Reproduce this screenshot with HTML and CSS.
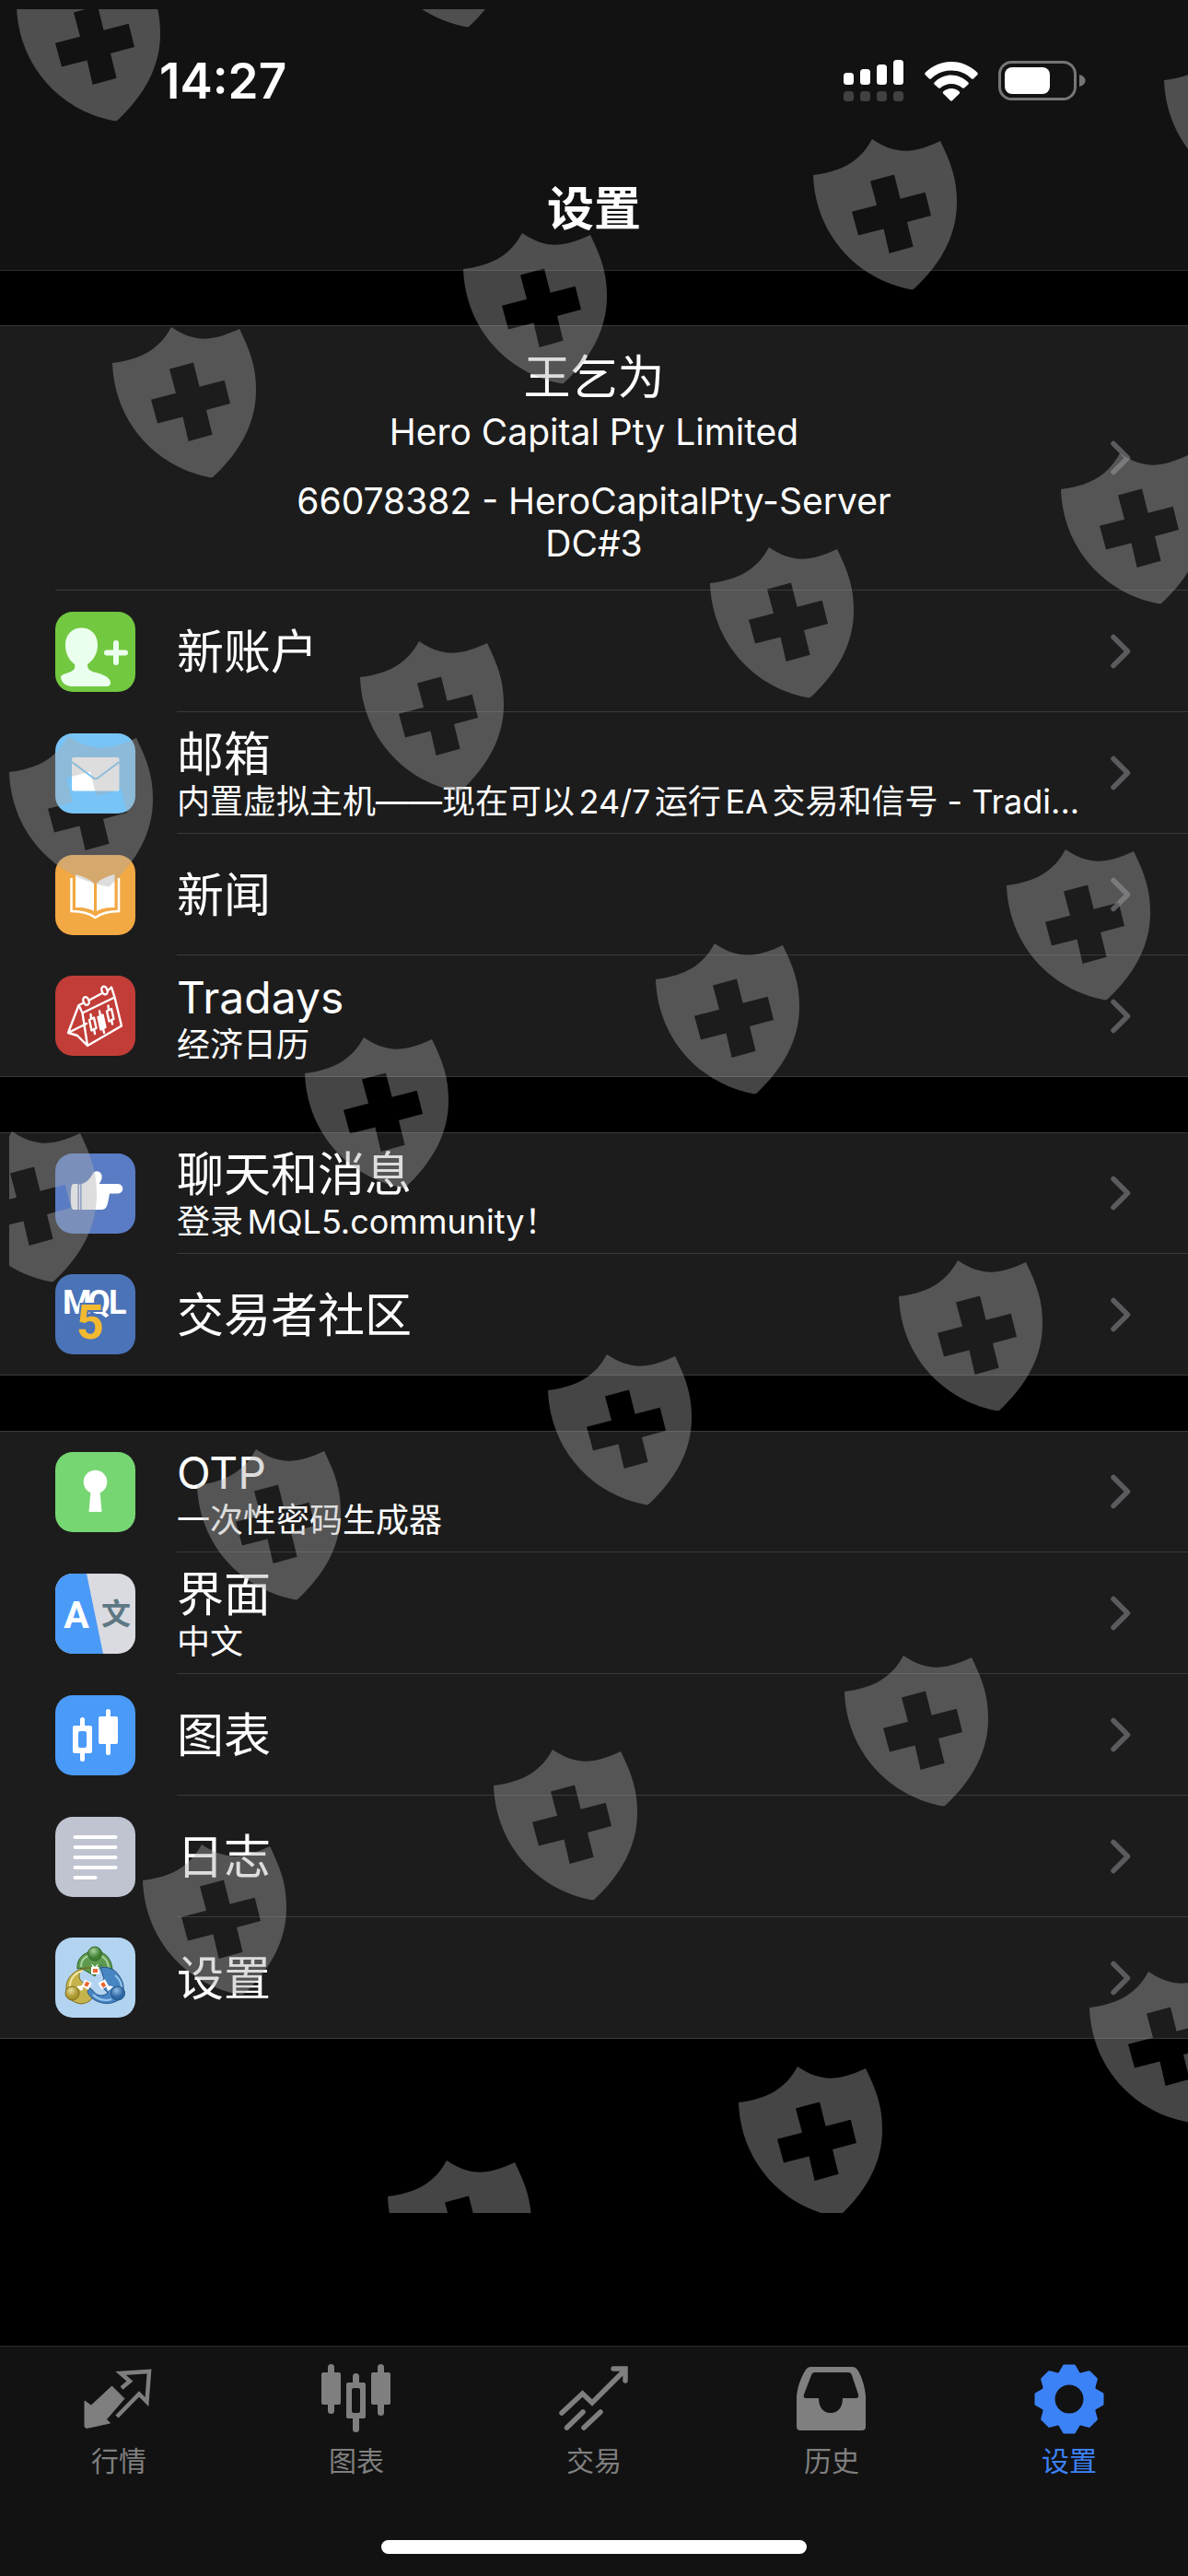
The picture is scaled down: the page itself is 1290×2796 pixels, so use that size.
FILE: index.html
```html
<!DOCTYPE html>
<html lang="zh-CN">
<head>
<meta charset="utf-8">
<meta name="viewport" content="width=device-width, initial-scale=1">
<title>设置</title>
<link rel="stylesheet" href="styles.css">
</head>
<body>
<svg class="defs" aria-hidden="true">
  <symbol id="chevron" viewBox="0 0 22 38">
    <path d="M3 3.500 L18.500 19 L3 34.500" fill="none" stroke="#5a5a5f" stroke-width="5.500" stroke-linecap="round" stroke-linejoin="round"/>
  </symbol>
  <path id="shield" fill-rule="evenodd" d="M0 0C32 -4 51 -15 64 -39C88 -23 106 -22 138 -37C150 -12 156 4 156 30C156 66 138 97 109 124Q107 124.500 105 124C45 112 2 62 0 0ZM62 6.400L69 32.700L42 39.700L49 65.400L76.500 58.400L82.600 85L108.600 77.700L102 51L128 44L121.700 18.700L94.600 25.700L88 -.600Z"/>
  <path id="tooth" d="M-9.500 -29L-5.500 -36H5.500L9.500 -29Z" stroke-width="3" stroke-linejoin="round"/>
</svg>

<header class="header">
  <div class="status">
    <time class="clock">14:27</time>
    <div class="indicators">
      <svg class="signal" viewBox="0 0 66 46" role="img" aria-label="信号">
        <g fill="#fff"><rect x="0" y="14" width="11" height="13" rx="3.500"/><rect x="18" y="10" width="11" height="17" rx="3.500"/><rect x="36" y="5" width="11" height="22" rx="3.500"/><rect x="54" y="0" width="11" height="27" rx="3.500"/></g>
        <g fill="#414141"><rect x="0" y="34" width="11" height="11" rx="3.500"/><rect x="18" y="34" width="11" height="11" rx="3.500"/><rect x="36" y="34" width="11" height="11" rx="3.500"/><rect x="54" y="34" width="11" height="11" rx="3.500"/></g>
      </svg>
      <svg class="wifi" viewBox="0 0 58 43" role="img" aria-label="无线网络">
        <g fill="#fff"><path d="M29 0C40 0 50 4.500 57.500 12Q58 13 57.500 14L53 18.500Q52 19 51 18.500C45 12.500 37.500 9.500 29 9.500S13 12.500 7 18.500Q6 19 5 18.500L.5 14Q0 13 .5 12C8 4.500 18 0 29 0Z"/><path d="M29 14.500C36 14.500 42.500 17.500 47.500 22.500Q48 23.500 47.500 24.500L43 28.500Q42 29 41 28.500C37.500 25.500 33.500 24 29 24S20.500 25.500 17 28.500Q16 29 15 28.500L10.500 24.500Q10 23.500 10.500 22.500C15.500 17.500 22 14.500 29 14.500Z"/><path d="M29 29C32.500 29 35.500 30.500 37.800 32.500Q38.500 33.500 37.800 34.500L30 42.300Q29 43 28 42.300L20.200 34.500Q19.500 33.500 20.200 32.500C22.500 30.500 25.500 29 29 29Z"/></g>
      </svg>
      <svg class="battery" viewBox="0 0 96 44" role="img" aria-label="电池">
        <rect x="1.500" y="1.500" width="82" height="40" rx="13" fill="none" stroke="#767676" stroke-width="3"/>
        <path d="M88 15C92 16 94.500 18.500 94.500 21.500S92 27 88 28Z" fill="#767676"/>
        <rect x="7" y="7" width="49" height="29" rx="8" fill="#fff"/>
      </svg>
    </div>
  </div>
  <h1 class="nav-title">设置</h1>
</header>

<main class="content">
  <section class="group">
    <a class="profile" href="#account">
      <span class="profile-text">
        <span class="title">王乞为</span>
        <span class="detail company">Hero Capital Pty Limited</span>
        <span class="detail server">66078382 - HeroCapitalPty-Server<br>DC#3</span>
      </span>
      <svg class="chevron"><use href="#chevron"/></svg>
    </a>
    <a class="row" href="#new-account">
      <svg class="icon" viewBox="0 0 87 87">
        <rect width="87" height="87" rx="19" fill="#72c840"/>
        <path d="M28.500 17.500C39 17.500 46 25 46 36C46 45 42 52 35 57C34.500 61 37 64 42 65.500C51 67.500 60 71 60 77Q60 81 56 81H18C12 81 6 77 6 70C8 68 13 66.500 17 65C21 63.500 22 60 21 57C14.500 52 11 45 11 36C11 25 18 17.500 28.500 17.500Z" fill="#ebffef"/>
        <path d="M66 34V55M56 44.500H76" stroke="#ebffef" stroke-width="6" stroke-linecap="round"/>
      </svg>
      <span class="body"><span class="text"><span class="title">新账户</span></span><svg class="chevron"><use href="#chevron"/></svg></span>
    </a>
    <a class="row" href="#mail">
      <svg class="icon" viewBox="0 0 87 87">
        <rect width="87" height="87" rx="19" fill="#78c4f6"/>
        <rect x="18" y="26" width="51.500" height="36.500" rx="2" fill="#fff"/>
        <path d="M18 31L41.500 48.500Q43.700 50 46 48.500L69.500 31" fill="none" stroke="#78c4f6" stroke-width="2"/>
      </svg>
      <span class="body"><span class="text"><span class="title">邮箱</span><span class="subtitle">内置虚拟主机——现在可以24/7运行EA交易和信号 - Tradi...</span></span><svg class="chevron"><use href="#chevron"/></svg></span>
    </a>
    <a class="row" href="#news">
      <svg class="icon" viewBox="0 0 87 87">
        <rect width="87" height="87" rx="19" fill="#f2a843"/>
        <path d="M22 21C29 23 38 26 42 31V61C36 57.500 30 57 22 57ZM64.500 21C57 23 49 26 45 31V61C51 57.500 57 57 64.500 57Z" fill="#fff"/>
        <path d="M17.500 25V61C28 61 36 62.500 43.500 68C51 62.500 59 61 69 61V25" fill="none" stroke="#fff" stroke-width="2.500"/>
      </svg>
      <span class="body"><span class="text"><span class="title">新闻</span></span><svg class="chevron"><use href="#chevron"/></svg></span>
    </a>
    <a class="row" href="#tradays">
      <svg class="icon" viewBox="0 0 87 87">
        <rect width="87" height="87" rx="19" fill="#c23d38"/>
        <g fill="none" stroke="#fff" stroke-width="2.400" stroke-linejoin="round" stroke-linecap="round">
          <path d="M29.500 40.500L64.500 23.500L72 54.500L35 76ZM29.500 40.500L25.500 32L14 62L24 65L35 76M14 62L34 52M25.500 32L31 29.500M38 26L50 19.500M58 15.500L61 12.500L64.500 23.500"/>
          <ellipse cx="33.500" cy="27.500" rx="3" ry="4.500" transform="rotate(-20 33.500 27.500)"/>
          <ellipse cx="53.500" cy="16" rx="3" ry="4.500" transform="rotate(-20 53.500 16)"/>
          <path d="M37 48L42 45.500L44.500 57L39.500 59.500ZM39 46.500L38.500 42M42 58L43 63M56 38.500L61 36L63.500 47L58.500 49.500ZM58 37L57.500 32.500M61 48L62 52.500"/>
          <path d="M46.500 45L51.500 42.500L54.500 56L49.500 58.500ZM49 43.500L48 38.500M52 57.500L53 62" fill="#fff"/>
        </g>
      </svg>
      <span class="body"><span class="text"><span class="title latin">Tradays</span><span class="subtitle">经济日历</span></span><svg class="chevron"><use href="#chevron"/></svg></span>
    </a>
  </section>

  <section class="group">
    <a class="row" href="#chat">
      <svg class="icon" viewBox="0 0 87 87">
        <rect width="87" height="87" rx="19" fill="#5a7cc4"/>
        <path d="M24.500 33V61H20.500Q18 61 17.500 58C16.500 51 16.500 43 17.500 36Q18 33 20.500 33ZM28.500 33C34 32 38 27 41 21.500C43 18.500 47 18.500 49.500 21.500C52 25 50 30 47.500 33H68C75 33 75 43.500 68 43.500H59C58 49 57.500 53 56 57Q54.500 61 50 61H28.500Z" fill="#fff"/>
        <path d="M26.500 33.500V61" stroke="#fff" stroke-width="1.500"/>
      </svg>
      <span class="body"><span class="text"><span class="title">聊天和消息</span><span class="subtitle">登录MQL5.community！</span></span><svg class="chevron"><use href="#chevron"/></svg></span>
    </a>
    <a class="row" href="#community">
      <svg class="icon" viewBox="0 0 87 87">
        <rect width="87" height="87" rx="19" fill="#4b73b7"/>
        <text class="logo-mql" x="8 35 58" y="43">MQL</text>
        <text class="logo-five" x="23" y="70">5</text>
      </svg>
      <span class="body"><span class="text"><span class="title">交易者社区</span></span><svg class="chevron"><use href="#chevron"/></svg></span>
    </a>
  </section>

  <section class="group">
    <a class="row" href="#otp">
      <svg class="icon" viewBox="0 0 87 87">
        <rect width="87" height="87" rx="19" fill="#76d672"/>
        <circle cx="43.500" cy="32.500" r="12.800" fill="#fff"/>
        <path d="M38.500 42H48.500L50.500 65H36.500Z" fill="#fff"/>
      </svg>
      <span class="body"><span class="text"><span class="title latin">OTP</span><span class="subtitle">一次性密码生成器</span></span><svg class="chevron"><use href="#chevron"/></svg></span>
    </a>
    <a class="row" href="#interface">
      <svg class="icon" viewBox="0 0 87 87">
        <rect width="87" height="87" rx="19" fill="#dadbe0"/>
        <path d="M19 0H34L52 87H19A19 19 0 0 1 0 68V19A19 19 0 0 1 19 0Z" fill="#4a9af8"/>
        <text class="glyph-a" x="23" y="59" text-anchor="middle">A</text>
        <text class="glyph-wen" x="66" y="55" text-anchor="middle">文</text>
      </svg>
      <span class="body"><span class="text"><span class="title">界面</span><span class="subtitle">中文</span></span><svg class="chevron"><use href="#chevron"/></svg></span>
    </a>
    <a class="row" href="#charts">
      <svg class="icon" viewBox="0 0 87 87">
        <rect width="87" height="87" rx="19" fill="#4a9af8"/>
        <g fill="#fff"><path fill-rule="evenodd" d="M21 33H38Q40 33 40 35V61Q40 63 38 63H21Q19 63 19 61V35Q19 33 21 33ZM27 39Q25 39 25 41V55Q25 57 27 57H32Q34 57 34 55V41Q34 39 32 39Z"/><rect x="27" y="24" width="5" height="11" rx="2.500"/><rect x="27" y="61" width="5" height="11" rx="2.500"/><rect x="47" y="23" width="21" height="30" rx="2"/><rect x="55" y="15" width="5" height="50" rx="2.500"/></g>
      </svg>
      <span class="body"><span class="text"><span class="title">图表</span></span><svg class="chevron"><use href="#chevron"/></svg></span>
    </a>
    <a class="row" href="#journal">
      <svg class="icon" viewBox="0 0 87 87">
        <rect width="87" height="87" rx="19" fill="#c0c3d0"/>
        <path d="M21.500 22H65.500M21.500 33H65.500M21.500 44H65.500M21.500 55H65.500M21.500 66H43.500" stroke="#fff" stroke-width="4" stroke-linecap="round"/>
      </svg>
      <span class="body"><span class="text"><span class="title">日志</span></span><svg class="chevron"><use href="#chevron"/></svg></span>
    </a>
    <a class="row" href="#settings">
      <svg class="icon" viewBox="0 0 87 87">
        <defs>
          <radialGradient id="green" cx=".4" cy=".3"><stop offset="0" stop-color="#a5cf98"/><stop offset="1" stop-color="#3f7f33"/></radialGradient>
          <radialGradient id="gold" cx=".4" cy=".3"><stop offset="0" stop-color="#e6dc94"/><stop offset="1" stop-color="#a8942c"/></radialGradient>
          <radialGradient id="blue" cx=".4" cy=".3"><stop offset="0" stop-color="#8dbbe4"/><stop offset="1" stop-color="#2b65a2"/></radialGradient>
        </defs>
        <rect width="87" height="87" rx="19" fill="#b3d4f0"/>
        <g stroke-width="1">
          <path d="M24 34C23 22 32 15 43 15C56 15 64 25 62 46L53 48C54 40 53 34 50 30L43 42L33 36Q28 32 24 34Z" fill="#5d9a50" stroke="#2e6327"/>
          <path d="M28 32C28 23 34 19 43 19S57 24 58 33" fill="none" stroke="#a7d19c" stroke-width="2"/>
          <path d="M39 33C32 32 25 34 26 43C27 49 34 50 41 58C43 65 38 71 28 72C16 70 11 63 12 54C12 42 24 32 39 33Z" fill="#c5b44c" stroke="#7b6b20"/>
          <path d="M16 53C16 44 22 38 30 36" fill="none" stroke="#eee5a2" stroke-width="2"/>
          <path d="M49 33C54 31 64 33 69 41C76 50 76 62 68 68C58 75 40 71 35 59C36 54 39 55 42 59C46 64 53 64 57 60L48 51L53 45Z" fill="#4785c3" stroke="#245286"/>
          <path d="M65 41C70 45 72 50 72 55M41 62C47 68 55 69 61 67" fill="none" stroke="#9bc7ec" stroke-width="2"/>
          <circle cx="43" cy="17.500" r="7.500" fill="url(#green)" stroke="#2e6327"/>
          <circle cx="18.500" cy="60.500" r="7.500" fill="url(#gold)" stroke="#7b6b20"/>
          <circle cx="68" cy="60.500" r="7.500" fill="url(#blue)" stroke="#245286"/>
        </g>
        <path d="M39 28L43 32L47 28L45 33H41ZM23 53L31 52L29 58L27 57ZM63 53L55 52L57 58L59 57Z" fill="#fff"/>
        <g fill="#fff"><rect x="39" y="32" width="8.500" height="8" /><rect x="30" y="47" width="8.500" height="8" transform="rotate(30 34 51)"/><rect x="48" y="47" width="8.500" height="8" transform="rotate(-30 52 51)"/></g>
        <g fill="#f0662e"><rect x="41" y="34" width="5" height="4"/><rect x="32" y="49" width="5" height="4" transform="rotate(-60 34 51)"/><rect x="50" y="49" width="5" height="4" transform="rotate(60 52 51)"/></g>
      </svg>
      <span class="body"><span class="text"><span class="title">设置</span></span><svg class="chevron"><use href="#chevron"/></svg></span>
    </a>
  </section>
</main>

<footer class="tabbar">
  <nav class="tabs">
    <a class="tab" href="#quotes">
      <svg class="tab-icon" viewBox="0 0 76 76">
        <path d="M41 26L50 18.500L40 10L71 8L68.500 41L60 32.500L36 57" fill="none" stroke="currentColor" stroke-width="4.500"/>
        <path d="M30.500 24L44 37.500L24.500 60L28.500 64L3 69.500L1 68V40L8 45Z" fill="currentColor" stroke="currentColor" stroke-linejoin="round"/>
      </svg>
      <span>行情</span>
    </a>
    <a class="tab" href="#chart">
      <svg class="tab-icon" viewBox="0 0 76 76">
        <g fill="currentColor"><rect x="0" y="9" width="21" height="35" rx="2"/><rect x="7" y="0" width="7" height="54" rx="3.500"/><rect x="54" y="9" width="21" height="35" rx="2"/><rect x="61" y="0" width="7" height="56" rx="3.500"/><path fill-rule="evenodd" d="M29 20H46Q48 20 48 22V57Q48 59 46 59H29Q27 59 27 57V22Q27 20 29 20ZM35 26Q33 26 33 28V51Q33 53 35 53H40Q42 53 42 51V28Q42 26 40 26Z"/><rect x="34" y="10" width="7" height="13" rx="3.500"/><rect x="34" y="56" width="7" height="18" rx="3.500"/></g>
      </svg>
      <span>图表</span>
    </a>
    <a class="tab" href="#trade">
      <svg class="tab-icon" viewBox="0 0 76 76">
        <path d="M3 53L25.500 32L36 42L71 7M59 5H72V18M8.500 69L26 52M27 69L45 52" fill="none" stroke="currentColor" stroke-width="5.500" stroke-linecap="round"/>
      </svg>
      <span>交易</span>
    </a>
    <a class="tab" href="#history">
      <svg class="tab-icon" viewBox="0 0 76 76">
        <path fill-rule="evenodd" fill="currentColor" d="M0 35C1 24 5 14 10 6Q12 3 15 3H61Q64 3 66 6C71 14 74 24 75 35V68Q75 72 71 72H4Q0 72 0 68ZM20 9Q17 9 16 12L8 33Q7 37 10 37H24C24 47 29 53 37 53S50 47 50 37H64Q68 37 67 33L60 12Q59 9 56 9Z"/>
      </svg>
      <span>历史</span>
    </a>
    <a class="tab active" href="#settings" aria-current="page">
      <svg class="tab-icon" viewBox="0 0 76 76">
        <g transform="translate(38 38)" fill="currentColor" stroke="currentColor">
          <circle r="23.200" fill="none" stroke-width="15.500"/>
          <use href="#tooth"/><use href="#tooth" transform="rotate(45)"/><use href="#tooth" transform="rotate(90)"/><use href="#tooth" transform="rotate(135)"/><use href="#tooth" transform="rotate(180)"/><use href="#tooth" transform="rotate(225)"/><use href="#tooth" transform="rotate(270)"/><use href="#tooth" transform="rotate(315)"/>
        </g>
      </svg>
      <span>设置</span>
    </a>
  </nav>
  <div class="home-indicator"></div>
</footer>

<svg class="watermark" aria-hidden="true">
  <use href="#shield" x="8" y="-3"/><use href="#shield" x="390" y="-105"/>
  <use href="#shield" x="873" y="180"/><use href="#shield" x="1254" y="77"/><use href="#shield" x="493" y="282"/><use href="#shield" x="112" y="384"/>
  <use href="#shield" x="1142" y="521"/><use href="#shield" x="761" y="623"/><use href="#shield" x="381" y="725"/><use href="#shield" x="0" y="828"/>
  <use href="#shield" x="1083" y="951"/><use href="#shield" x="702" y="1053"/><use href="#shield" x="321" y="1155"/><use href="#shield" x="-61" y="1257"/>
  <use href="#shield" x="966" y="1397"/><use href="#shield" x="585" y="1499"/><use href="#shield" x="204" y="1602"/>
  <use href="#shield" x="907" y="1826"/><use href="#shield" x="526" y="1928"/><use href="#shield" x="145" y="2031"/>
  <use href="#shield" x="1173" y="2169"/><use href="#shield" x="792" y="2272"/><use href="#shield" x="411" y="2374"/>
</svg>
</body>
</html>
```
FILE: styles.css
```css
* {
  box-sizing: border-box;
}

body {
  position: relative;
  display: flex;
  flex-direction: column;
  min-height: 100vh;
  margin: 0;
  background: #000;
  color: #fff;
  font-family: Inter, "Noto Sans CJK SC", sans-serif;
  text-autospace: normal;
}

a {
  color: inherit;
  text-decoration: none;
}

svg {
  display: block;
  flex: none;
}

.defs {
  position: absolute;
  width: 0;
  height: 0;
}

/* Header */
.header {
  padding-bottom: 15px;
  border-bottom: 1px solid #2c2c2c;
  background: #121212;
}

.status {
  display: flex;
  align-items: center;
  justify-content: space-between;
  height: 176px;
  padding: 0 110px 0 173px;
}

.clock {
  font-size: 53px;
  font-weight: 600;
  line-height: 64px;
}

.indicators {
  display: flex;
  align-items: center;
  gap: 22px;
}

.signal {
  width: 66px;
  height: 46px;
}

.wifi {
  width: 58px;
  height: 43px;
}

.battery {
  width: 96px;
  height: 44px;
}

.nav-title {
  margin: 0;
  font-size: 51px;
  font-weight: 600;
  line-height: 102px;
  text-align: center;
}

/* Settings list */
.content {
  flex: 1;
  display: flex;
  flex-direction: column;
  gap: 60px;
  padding: 59px 0 60px;
}

.group {
  border-bottom: 1px solid #3a3a3c;
  box-shadow: inset 0 1px #3a3a3c;
  background: #1c1c1c;
}

.profile {
  display: flex;
  align-items: center;
  min-height: 288px;
  margin-left: 60px;
  padding-right: 62px;
  border-bottom: 1px solid #3a3a3e;
}

.profile-text {
  flex: 1;
  display: flex;
  flex-direction: column;
  padding-left: 24px;
  text-align: center;
}

.detail {
  font-size: 39px;
  line-height: 46px;
}

.company {
  margin-top: 6px;
}

.server {
  margin-top: 29px;
}

.row {
  display: flex;
  align-items: center;
  gap: 45px;
  padding-left: 60px;
}

.icon {
  width: 87px;
  height: 87px;
}

.body {
  flex: 1;
  min-width: 0;
  display: flex;
  align-items: center;
  gap: 28px;
  min-height: 132px;
  padding-right: 62px;
  border-bottom: 1px solid #3a3a3e;
}

.row:last-child .body {
  min-height: 131px;
  border-bottom: 0;
}

.text {
  flex: 1;
  min-width: 0;
  display: flex;
  flex-direction: column;
  padding-top: 3px;
}

.title {
  font-size: 51px;
  line-height: 60px;
}

.latin {
  font-size: 48px;
}

.subtitle {
  overflow: hidden;
  font-size: 36px;
  line-height: 42px;
  text-overflow: ellipsis;
  white-space: nowrap;
}

.chevron {
  width: 22px;
  height: 38px;
}

.logo-mql {
  fill: #fff;
  font: 700 36px Roboto, sans-serif;
}

.logo-five {
  fill: #f3b92f;
  stroke: #4b73b7;
  stroke-width: 4px;
  paint-order: stroke;
  font: 700 52px Roboto, sans-serif;
}

.glyph-a {
  fill: #fff;
  font: 700 41px Roboto, sans-serif;
}

.glyph-wen {
  fill: #5d7884;
  font: 700 32px "Noto Sans CJK SC", sans-serif;
}

/* Tab bar */
.tabbar {
  display: flex;
  flex-direction: column;
  align-items: center;
  gap: 65px;
  padding: 19px 0 24px;
  border-top: 1px solid #2c2c2c;
  background: #121212;
}

.tabs {
  display: grid;
  grid-template-columns: repeat(5, 1fr);
  width: 100%;
}

.tab {
  display: flex;
  flex-direction: column;
  align-items: center;
  gap: 8px;
  color: #7f7f7f;
  font-size: 30px;
  line-height: 42px;
}

.tab.active {
  color: #3c82f7;
}

.tab-icon {
  width: 76px;
  height: 76px;
}

.home-indicator {
  width: 462px;
  max-width: 60%;
  height: 15px;
  border-radius: 8px;
  background: #fff;
}

/* Shield watermark laid over the screen */
.watermark {
  position: absolute;
  top: 10px;
  left: 10px;
  width: calc(100% - 10px);
  height: 2392px;
  overflow: hidden;
  fill: #acacac;
  opacity: .4;
  pointer-events: none;
}
```
